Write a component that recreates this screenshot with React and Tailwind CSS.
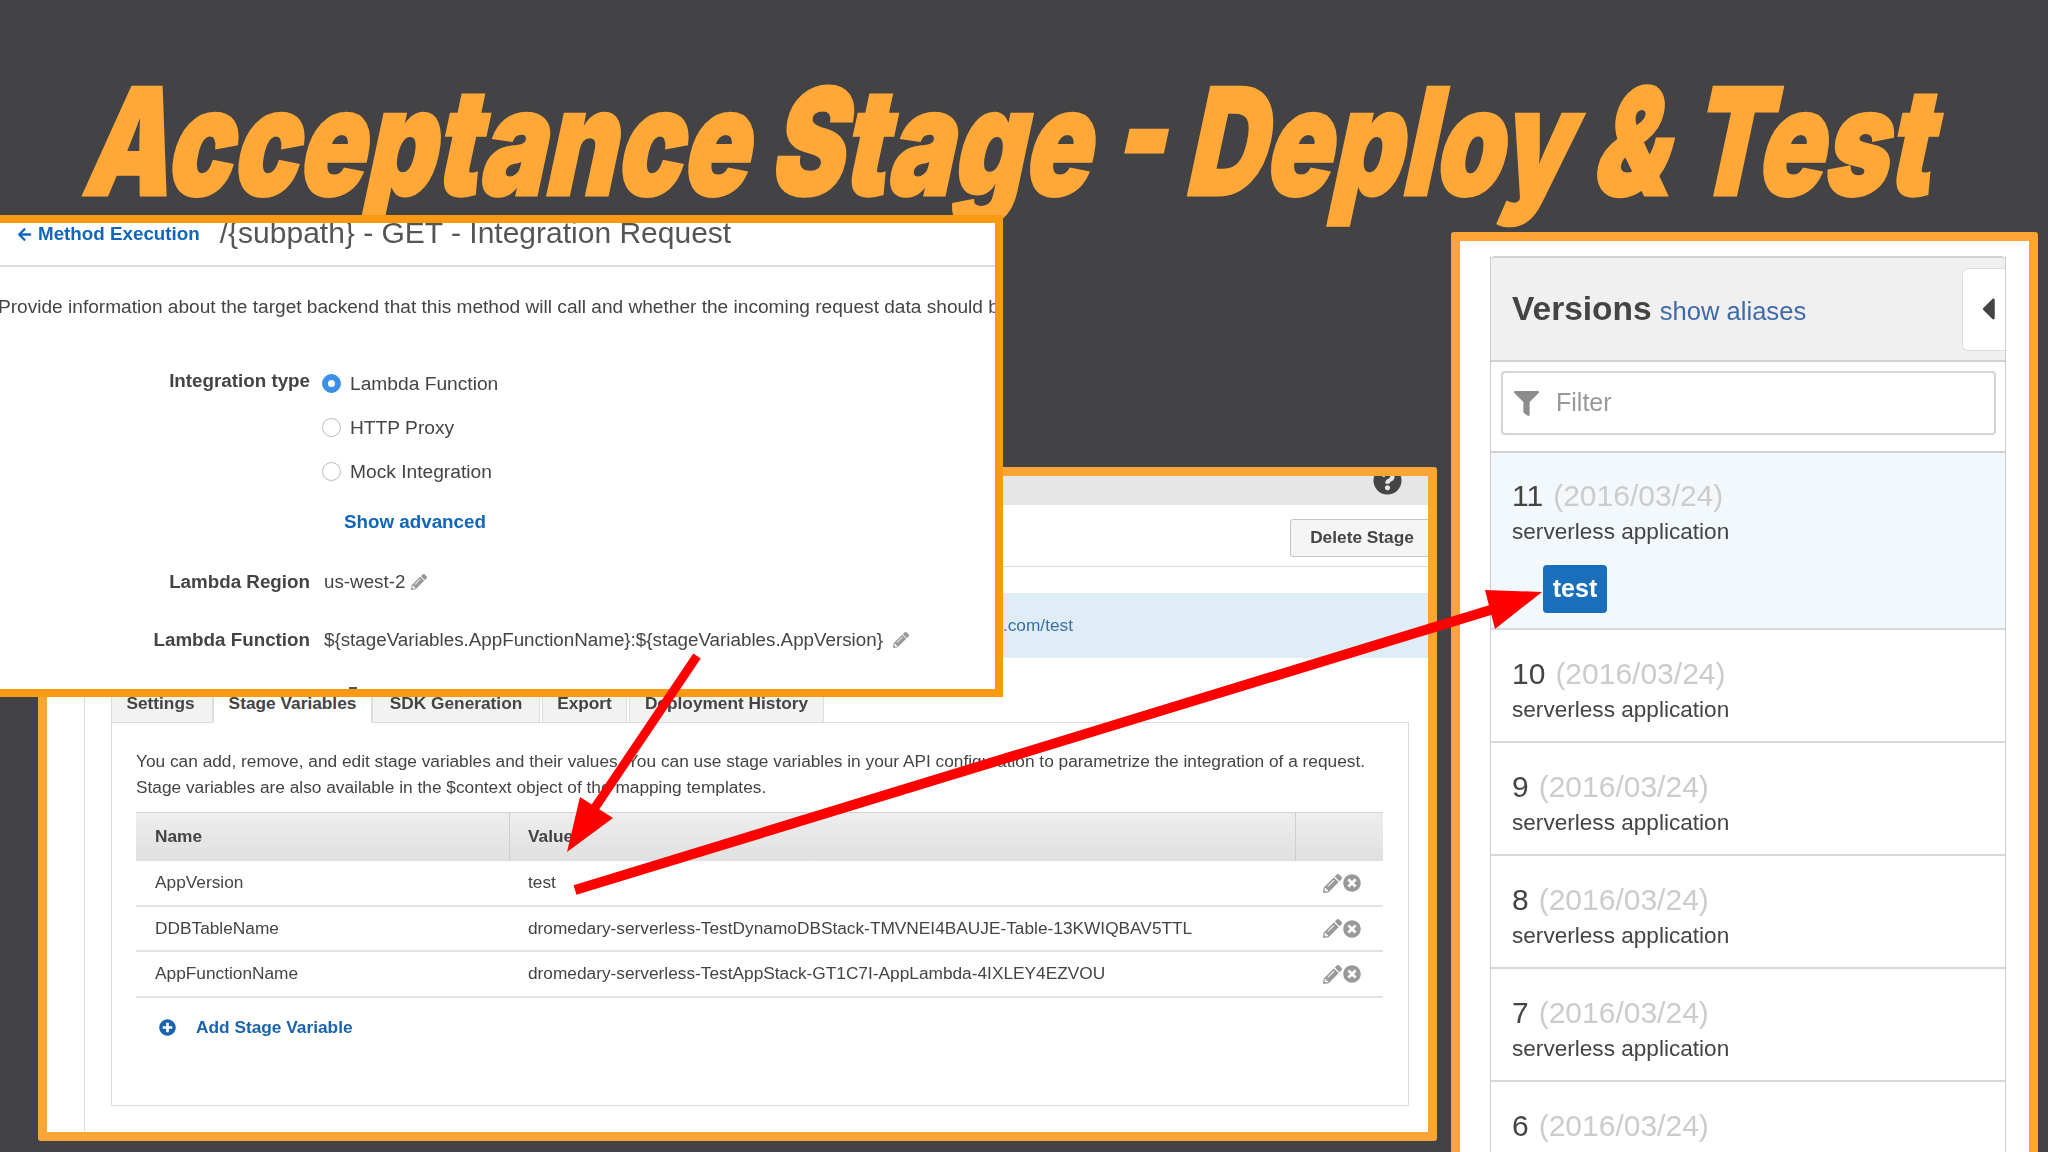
import { FaArrowLeft, FaCaretLeft, FaFilter, FaPencilAlt, FaPlusCircle, FaQuestionCircle, FaTimesCircle } from 'react-icons/fa';

const TABS = [
  { label: 'Settings', width: 'w-[102px] pr-[3px]' },
  { label: 'Stage Variables', width: 'w-[159px]', active: true },
  { label: 'SDK Generation', width: 'w-[168px]' },
  { label: 'Export', width: 'w-[85px] ml-[2px]' },
  { label: 'Deployment History', width: 'w-[195px] ml-[2px]' },
];

const VARIABLES = [
  { name: 'AppVersion', value: 'test' },
  { name: 'DDBTableName', value: 'dromedary-serverless-TestDynamoDBStack-TMVNEI4BAUJE-Table-13KWIQBAV5TTL' },
  { name: 'AppFunctionName', value: 'dromedary-serverless-TestAppStack-GT1C7I-AppLambda-4IXLEY4EZVOU' },
];

const VERSIONS = ['10', '9', '8', '7'];

function Radio({ checked }) {
  return (
    <span className={`w-[19px] h-[19px] rounded-full shrink-0 flex items-center justify-center border ${checked ? 'bg-[#3b8fe8] border-[#3b8fe8]' : 'bg-white border-[#bbbbbb]'}`}>
      {checked && <span className="w-[7px] h-[7px] rounded-full bg-white" />}
    </span>
  );
}

function FormRow({ label, children, className = '' }) {
  return (
    <div className={`flex items-center h-[44px] ${className}`}>
      <div className="w-[310px] shrink-0 text-right font-bold text-[#444444]">{label}</div>
      <div className="ml-[14px] flex items-center gap-[6px]">{children}</div>
    </div>
  );
}

function IntegrationPanel() {
  return (
    <div className="absolute left-[-8px] top-[215px] w-[1011px] h-[482px] border-[8px] border-[#fb9a10] bg-white overflow-hidden text-[18.8px] text-[#444444] whitespace-nowrap z-20">
      <div className="h-[44px] border-b-2 border-[#dddddd] blur-[0.4px]">
        <div className="flex items-center h-[22px]">
          <FaArrowLeft className="ml-[17px] text-[15px] text-[#1166bb]" />
          <span className="ml-[6px] text-[18.8px] font-bold text-[#1166bb]">Method Execution</span>
          <span className="ml-[20px] mt-[-3px] text-[30px] text-[#555555]">{'/{subpath} - GET - Integration Request'}</span>
        </div>
      </div>
      <div className="blur-[0.4px]">
        <p className="mt-[28px] ml-[-2px] leading-[24px] text-[19.1px]">
          Provide information about the target backend that this method will call and whether the incoming request data should be
        </p>
        <div className="mt-[43px]">
          <FormRow label={<span className="relative top-[-3px]">Integration type</span>}>
            <span className="ml-[-2px]"><Radio checked /></span>
            <span className="ml-[3px] text-[19.2px]">Lambda Function</span>
          </FormRow>
          <FormRow>
            <span className="ml-[-2px]"><Radio /></span>
            <span className="ml-[3px] text-[19.2px]">HTTP Proxy</span>
          </FormRow>
          <FormRow>
            <span className="ml-[-2px]"><Radio /></span>
            <span className="ml-[3px] text-[19.2px]">Mock Integration</span>
          </FormRow>
          <FormRow className="mt-[6px]">
            <span className="ml-[20px] font-bold text-[#1166bb]">Show advanced</span>
          </FormRow>
          <FormRow label="Lambda Region" className="mt-[16px]">
            <span>us-west-2</span>
            <FaPencilAlt className="text-[16px] text-[#999999]" />
          </FormRow>
          <FormRow label="Lambda Function" className="mt-[14px]">
            <span>{'${stageVariables.AppFunctionName}:${stageVariables.AppVersion}'}</span>
            <FaPencilAlt className="ml-[4px] text-[16px] text-[#999999]" />
          </FormRow>
        </div>
        <div className="mt-[25px] ml-[349px] w-[8px] h-[3px] bg-[#555555]" />
      </div>
    </div>
  );
}

function StagePanel() {
  return (
    <div className="absolute left-[38px] top-[467px] w-[1399px] h-[674px] border-[9px] border-[#ffa535] rounded-[3px] bg-white overflow-hidden text-[17.3px] text-[#444444] whitespace-nowrap z-10">
      <div className="blur-[0.4px]">
        <div className="h-[29px] bg-[#e6e6e6] overflow-hidden flex justify-end pr-[26px]">
          <FaQuestionCircle className="mt-[-10px] text-[29px] text-[#444444]" />
        </div>
        <div className="h-[62px] border-b border-[#dddddd] flex items-start justify-end">
          <button className="mt-[14px] mr-[-6px] w-[144px] h-[38px] rounded-[3px] border border-[#c4c4c4] bg-[#f5f5f5] font-bold text-[#444444]">
            Delete Stage
          </button>
        </div>
        <div className="mt-[26px] h-[65px] bg-[#dfeef6] flex items-center justify-end pr-[355px] text-[#3a6ea5]">.com/test</div>
        <div className="flex h-[475px]">
          <div className="w-[38px] shrink-0 border-r border-[#dddddd]" />
          <div className="pl-[26px]">
            <div className="mt-[26px] flex h-[39px]">
              {TABS.map((tab) => (
                <div
                  key={tab.label}
                  className={`${tab.width} flex items-center justify-center font-bold border border-[#dddddd] ${tab.active ? 'bg-white border-b-white relative z-10' : 'bg-[#f2f2f2]'}`}
                >
                  {tab.label}
                </div>
              ))}
            </div>
            <div className="mt-[-1px] w-[1298px] h-[384px] border border-[#dddddd] px-[24px] pt-[26px]">
              <p className="leading-[26px] mt-[-1.5px]">
                You can add, remove, and edit stage variables and their values. You can use stage variables in your API configuration to parametrize the integration of a request.
                <br />
                Stage variables are also available in the $context object of the mapping templates.
              </p>
              <div className="mt-[12.5px] w-[1247px]">
                <div className="flex h-[49px] items-stretch font-bold bg-gradient-to-b from-[#eeeeee] to-[#e0e0e0] border-t border-[#d4d4d4]">
                  <div className="w-[374px] pl-[19px] flex items-center border-r border-[#cfcfcf]">Name</div>
                  <div className="w-[786px] pl-[18px] flex items-center border-r border-[#cfcfcf]">Value</div>
                </div>
                {VARIABLES.map((row) => (
                  <div key={row.name} className="flex h-[45.5px] pt-[1px] items-center border-b-2 border-[#e3e3e3]">
                    <div className="w-[374px] pl-[19px]">{row.name}</div>
                    <div className="w-[786px] pl-[18px]">{row.value}</div>
                    <div className="flex items-center ml-[27px] gap-[1px] text-[#999999]">
                      <FaPencilAlt className="text-[19px]" />
                      <FaTimesCircle className="text-[18px]" />
                    </div>
                  </div>
                ))}
              </div>
              <div className="mt-[18px] h-[24px] flex items-center pl-[23px] font-bold text-[#1a62ad]">
                <FaPlusCircle className="text-[17px]" />
                <span className="ml-[20px]">Add Stage Variable</span>
              </div>
            </div>
          </div>
        </div>
      </div>
    </div>
  );
}

function VersionRow({ number, active, noSubtitle }) {
  return (
    <div className={`border-b-2 border-[#d8d8d8] ${active ? 'bg-[#f2f8fc] h-[177px]' : 'h-[113px]'}`}>
      <div className={`pl-[21px] flex items-baseline ${active ? 'pt-[24px]' : 'pt-[25px]'}`}>
        <span className="text-[30px] leading-[38px] text-[#444444]">{number}</span>
        <span className="ml-[10px] text-[30px] leading-[38px] text-[#cccccc]">(2016/03/24)</span>
      </div>
      {!noSubtitle && (
        <div className="pl-[21px] text-[22.6px] leading-[28px] text-[#444444] mt-[2.5px]">serverless application</div>
      )}
      {active && (
        <div className="ml-[52px] mt-[19px] w-[64px] h-[48px] rounded-[4px] bg-[#1a6fbd] flex items-center justify-center text-[25px] font-bold text-white">
          test
        </div>
      )}
    </div>
  );
}

function VersionsPanel() {
  return (
    <div className="absolute left-[1451px] top-[232px] w-[587px] h-[940px] border-[9px] border-[#ffa535] rounded-t-[3px] bg-white overflow-hidden whitespace-nowrap pl-[30px] pt-[15px]">
      <div className="w-[516px] border-x border-[#cccccc] blur-[0.4px]">
        <div className="h-[106px] bg-[#f0f0f0] border-t-2 border-b-2 border-[#d2d2d2] rounded-t-[4px] flex items-center justify-between pl-[21px]">
          <div className="flex items-baseline">
            <span className="text-[33.5px] font-bold text-[#444444]">Versions</span>
            <span className="ml-[8px] text-[25.6px] text-[#3f6aa8]">show aliases</span>
          </div>
          <div className="w-[43px] h-[83px] bg-white border border-r-0 border-[#dddddd] rounded-l-[6px] flex items-center">
            <FaCaretLeft className="ml-[8px] text-[36px] text-[#444444]" />
          </div>
        </div>
        <div className="h-[91px] border-b-2 border-[#d2d2d2] pt-[9px] pl-[10px]">
          <div className="w-[495px] h-[64px] rounded-[4px] border-2 border-[#d4d4d4] flex items-center pl-[11px]">
            <FaFilter className="text-[25px] text-[#8c8c8c]" />
            <span className="ml-[17px] text-[25px] text-[#999999]">Filter</span>
          </div>
        </div>
        <VersionRow number="11" active />
        {VERSIONS.map((number) => (
          <VersionRow key={number} number={number} />
        ))}
        <VersionRow number="6" noSubtitle />
      </div>
    </div>
  );
}

function Arrows() {
  return (
    <svg className="absolute inset-0 z-30 pointer-events-none" width="2048" height="1152" viewBox="0 0 2048 1152">
      <path d="M697 656 L592 812" stroke="#ff0000" strokeWidth="9" fill="none" />
      <polygon points="567,852 580,797 613,818" fill="#ff0000" />
      <path d="M575 890 L1510 604" stroke="#ff0000" strokeWidth="10" fill="none" />
      <polygon points="1542,592 1485,590 1495,629" fill="#ff0000" />
    </svg>
  );
}

export default function App() {
  return (
    <div className="relative w-[2048px] h-[1152px] overflow-hidden bg-[#434244] font-['Liberation_Sans',sans-serif]">
      <h1 className="absolute left-[92px] top-[46px] origin-left whitespace-nowrap font-['Inter',sans-serif] font-black text-[148px] leading-[1.3] text-[#ffa838] [transform:skewX(-12deg)_scaleX(0.74)] [-webkit-text-stroke:3px_#ffa838]">
        Acceptance Stage - Deploy &amp; Test
      </h1>
      <StagePanel />
      <IntegrationPanel />
      <VersionsPanel />
      <Arrows />
    </div>
  );
}
